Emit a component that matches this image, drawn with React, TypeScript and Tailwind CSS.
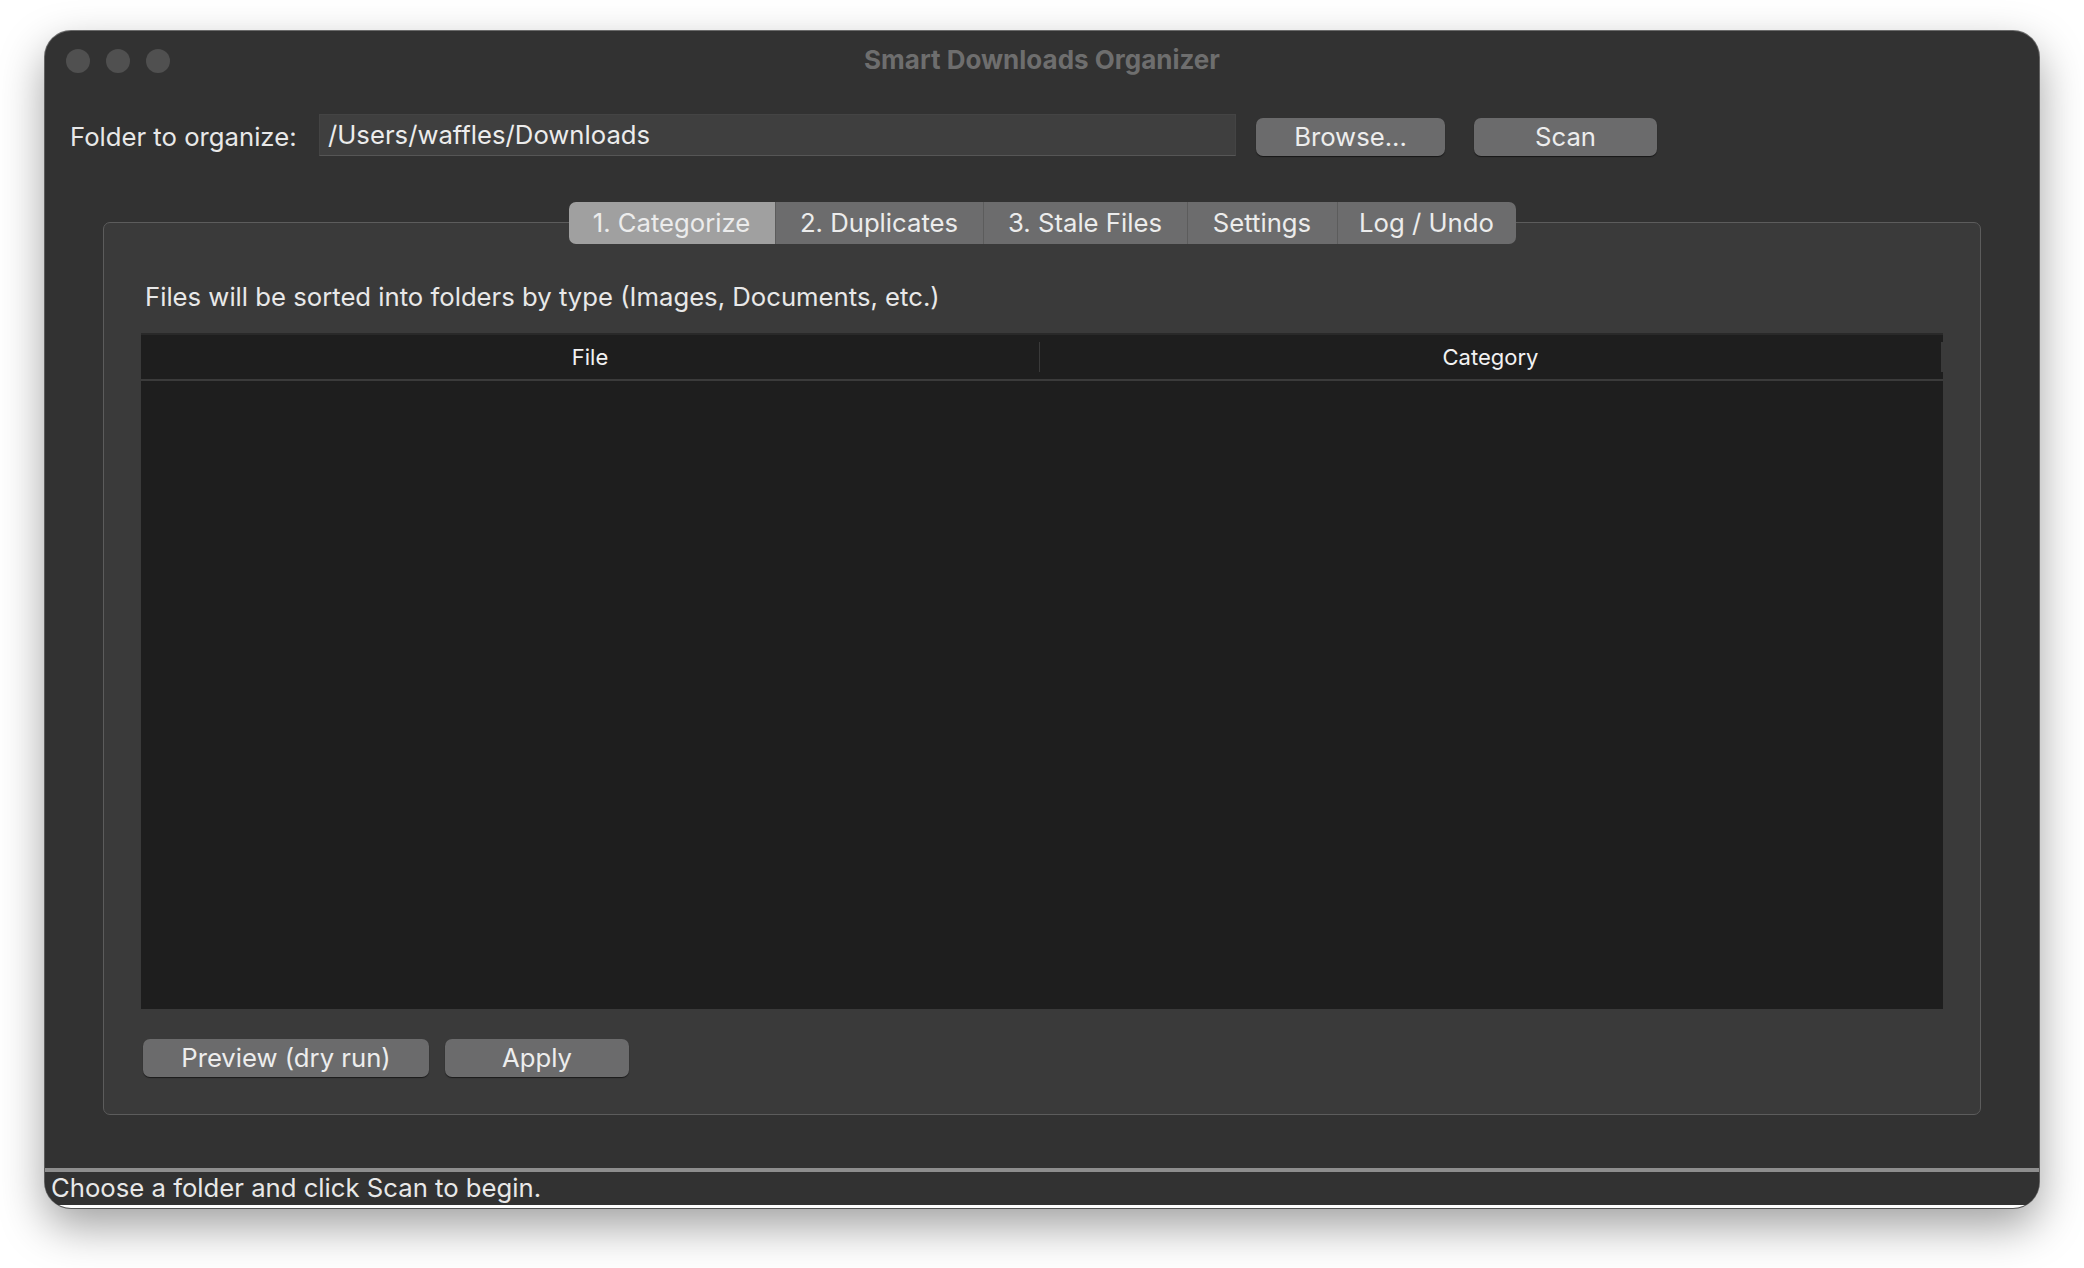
import React from "react";

const font = { fontFamily: "Inter, Roboto, 'Liberation Sans', sans-serif" };

const tabs = ["1. Categorize", "2. Duplicates", "3. Stale Files", "Settings", "Log / Undo"];

const MacButton = ({ label, className }: { label: string; className: string }) => (
    <button
        className={`h-[38px] rounded-[7px] bg-[#6b6b6c] text-[25.7px] leading-none text-[#ededed] shadow-[0_1px_1px_rgba(0,0,0,0.55)] ${className}`}
    >
        {label}
    </button>
);

const App = () => {
    return (
        <div className="h-[1268px] w-[2084px] bg-white pl-[45px] pt-[31px]" style={font}>
            {/* window */}
            <div className="flex h-[1177px] w-[1994px] flex-col overflow-hidden rounded-[26px] bg-[#323232] shadow-[0_18px_45px_rgba(0,0,0,0.38),0_0_0_1px_rgba(0,0,0,0.55)]">
                {/* title bar */}
                <div className="relative flex h-[56px] shrink-0 items-center pl-[21px]">
                    <div className="flex gap-[16px] pt-[4px]">
                        <span className="h-[24px] w-[24px] rounded-full bg-[#505050]" />
                        <span className="h-[24px] w-[24px] rounded-full bg-[#505050]" />
                        <span className="h-[24px] w-[24px] rounded-full bg-[#505050]" />
                    </div>
                    <div className="absolute inset-x-0 top-[9px] text-center text-[26px] font-bold text-[#6e6e6e]">
                        Smart Downloads Organizer
                    </div>
                </div>

                {/* folder row */}
                <div className="mt-[27px] flex h-[42px] shrink-0 items-start pl-[25px]">
                    <span className="w-[249px] pt-[4px] text-[25.7px] text-[#e8e8e8]">Folder to organize:</span>
                    <div className="flex h-[42px] w-[917px] items-center border border-[#444] border-b-[#565656] bg-[#3f3f3f] pl-[8px] text-[25.7px] text-[#ececec]">
                        /Users/waffles/Downloads
                    </div>
                    <MacButton label="Browse..." className="ml-[20px] mt-[4px] w-[189px]" />
                    <MacButton label="Scan" className="ml-[29px] mt-[4px] w-[183px]" />
                </div>

                {/* tabs */}
                <div className="relative z-10 mt-[46px] flex shrink-0 justify-center">
                    <div className="flex h-[42px] overflow-hidden rounded-[7px] text-[25.7px] text-[#ececec]">
                        {tabs.map((t, i) => (
                            <div
                                key={t}
                                className={
                                    i === 0
                                        ? "flex w-[206px] items-center justify-center bg-[#a0a0a0]"
                                        : i === 1
                                        ? "flex w-[208px] items-center justify-center border-l border-[#5c5c5c] bg-[#6c6c6d]"
                                        : i === 2
                                        ? "flex w-[204px] items-center justify-center border-l border-[#5c5c5c] bg-[#6c6c6d]"
                                        : i === 3
                                        ? "flex w-[150px] items-center justify-center border-l border-[#5c5c5c] bg-[#6c6c6d]"
                                        : "flex w-[179px] items-center justify-center border-l border-[#5c5c5c] bg-[#6c6c6d]"
                                }
                            >
                                {t}
                            </div>
                        ))}
                    </div>
                </div>

                {/* pane */}
                <div className="mx-[58px] -mt-[22px] flex shrink-0 flex-col rounded-[7px] border border-[#5c5c5c] bg-[#3a3a3a] px-[37px] pb-[37px] pt-[58px]">
                    <p className="h-[32px] pl-[4px] text-[25.7px] leading-[32px] text-[#e8e8e8]">
                        Files will be sorted into folders by type (Images, Documents, etc.)
                    </p>
                    <div className="mt-[20px] flex h-[676px] flex-col border-t-2 border-[#292929] bg-[#1e1e1e]">
                        <div className="flex h-[46px] border-b-2 border-[#3b3b3b] text-[22px] text-[#f2f2f2]">
                            <div className="my-[7px] flex w-[899px] items-center justify-center border-r border-[#3a3a3a]">File</div>
                            <div className="my-[7px] flex flex-1 items-center justify-center border-r-2 border-[#3a3a3a]">Category</div>
                        </div>
                        <div className="flex-1" />
                    </div>
                    <div className="mt-[30px] flex gap-[16px] pl-[2px]">
                        <MacButton label="Preview (dry run)" className="w-[286px]" />
                        <MacButton label="Apply" className="w-[184px]" />
                    </div>
                </div>

                <div className="flex-1" />

                {/* status bar */}
                <div className="h-[40px] shrink-0 border-t-[4px] border-b-[3px] border-t-[#8e8e8e] border-b-white bg-[#323232] pl-[6px] text-[25.7px] leading-[32px] text-[#e8e8e8]">
                    Choose a folder and click Scan to begin.
                </div>
            </div>
        </div>
    );
};

export default App;
